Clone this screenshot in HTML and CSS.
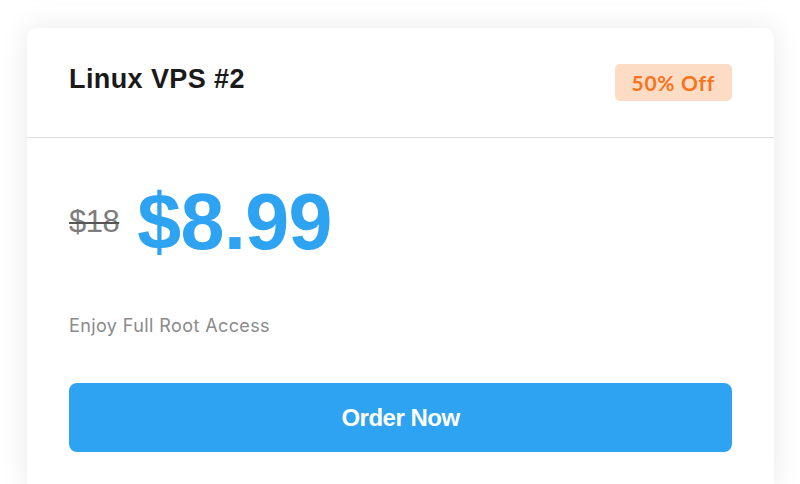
FILE: index.html
```html
<!DOCTYPE html>
<html>
<head>
<meta charset="utf-8">
<link rel="stylesheet" href="styles.css">
</head>
<body>
<div class="page">
  <div class="card card-prev"></div>
  <div class="card">
    <div class="card-head">
      <h2 class="title">Linux VPS #2</h2>
      <span class="badge">50% Off</span>
    </div>
    <div class="card-body">
      <div class="price-row">
        <span class="old-price">$18</span>
        <span class="price">$8.99</span>
      </div>
      <p class="desc">Enjoy Full Root Access</p>
      <a class="btn" href="#">Order Now</a>
    </div>
  </div>
</div>
</body>
</html>
```
FILE: styles.css
```css
html, body {
  margin: 0;
  padding: 0;
  background: #ffffff;
  overflow: hidden;
}
.page {
  padding: 0 26px 0 27px;
}
.card {
  background: #ffffff;
  border-radius: 10px;
  box-shadow: 0 0 30px rgba(0, 0, 0, 0.09);
}
.card-prev {
  height: 80px;
  margin-top: -100px;
  margin-bottom: 48px;
}
.card-head {
  display: flex;
  justify-content: space-between;
  align-items: flex-start;
  padding: 36px 42px 36px 42px;
  border-bottom: 1px solid #dedede;
}
.title {
  margin: 0;
  font-family: "Liberation Sans", Arial, sans-serif;
  font-weight: 700;
  font-size: 27px;
  line-height: 30px;
  color: #1a1a1a;
  letter-spacing: 0.4px;
}
.badge {
  display: block;
  height: 37px;
  line-height: 37px;
  padding: 0 17px;
  border-radius: 5px;
  background: #fddcc5;
  color: #f7731c;
  font-family: "Lato", sans-serif;
  font-weight: 700;
  font-size: 21px;
  letter-spacing: 0.7px;
}
.card-body {
  padding: 45px 42px 40px 42px;
}
.price-row {
  display: flex;
  align-items: center;
  gap: 18px;
}
.old-price {
  font-family: "Liberation Sans", Arial, sans-serif;
  font-size: 31px;
  color: #7d7d7d;
  text-decoration: line-through;
  text-decoration-color: #555;
  text-decoration-thickness: 2px;
  letter-spacing: -0.5px;
}
.price {
  font-family: "Liberation Sans", Arial, sans-serif;
  font-weight: 700;
  font-size: 79px;
  line-height: 78px;
  color: #2ea3f2;
  letter-spacing: -0.6px;
}
.desc {
  margin: 52px 0 44px 0;
  font-family: "Inter", sans-serif;
  font-size: 18px;
  line-height: 26px;
  color: #8a8a8a;
  letter-spacing: 0.4px;
}
.btn {
  display: block;
  height: 69px;
  line-height: 69px;
  border-radius: 8px;
  background: #2ea3f2;
  color: #ffffff;
  text-align: center;
  text-decoration: none;
  font-family: "Liberation Sans", Arial, sans-serif;
  font-weight: 700;
  font-size: 24px;
  letter-spacing: -0.5px;
}
```
